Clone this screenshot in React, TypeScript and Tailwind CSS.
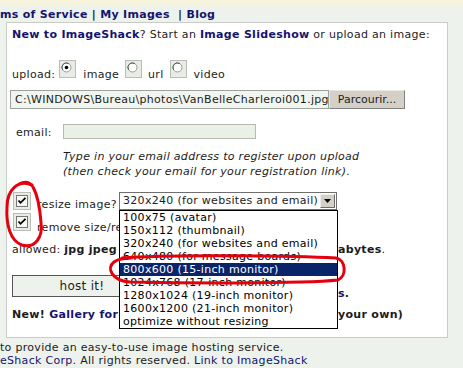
import React from 'react';

const NAVY = 'text-[#14146e]';

const options = [
    '100x75 (avatar)',
    '150x112 (thumbnail)',
    '320x240 (for websites and email)',
    '640x480 (for message boards)',
    '800x600 (15-inch monitor)',
    '1024x768 (17-inch monitor)',
    '1280x1024 (19-inch monitor)',
    '1600x1200 (21-inch monitor)',
    'optimize without resizing',
];

/** Square radio tile as drawn by the old browser theme */
function Radio({ checked }: { checked?: boolean }) {
    return (
        <svg width="17" height="18" viewBox="0 0 17 18" className="shrink-0">
            <rect x="0.5" y="0.5" width="16" height="17" fill="#e7ece5" stroke="#b8bdb6" />
            <circle cx="7.5" cy="7.5" r="4.5" fill="#fff" stroke="#9a9a9a" />
            <path d="M3.6 9.8 A4.5 4.5 0 0 1 9.8 3.6" fill="none" stroke="#555" strokeWidth="1" />
            {checked && <circle cx="7.5" cy="7.5" r="1.8" fill="#000" />}
        </svg>
    );
}

function Check() {
    return (
        <svg width="18" height="18" viewBox="0 0 18 18" className="shrink-0">
            <rect x="0.5" y="0.5" width="17" height="17" fill="#e7ece5" stroke="#b8bdb6" />
            <rect x="3.5" y="3.5" width="11" height="11" fill="#f7f8f5" stroke="#777" />
            <path d="M5.5 8.5 L7.5 10.8 L12.5 5.8" fill="none" stroke="#000" strokeWidth="1.8" />
        </svg>
    );
}

export default function App() {
    return (
        <div className="relative w-[463px] h-[368px] overflow-hidden bg-[#eef2ec] text-[11px] tracking-[0.3px] text-[#1c1c1c] font-['DejaVu_Sans',Verdana,sans-serif]">
            <div className="h-[5px] bg-[#f6f3dd]" />

            {/* top links */}
            <div className="h-[17px] pt-[3px] leading-[14px] font-bold whitespace-pre">
                <span className={NAVY}>ms of Service</span>
                <span> | </span>
                <span className={NAVY}>My Images</span>
                <span>  | </span>
                <span className={NAVY}>Blog</span>
            </div>

            {/* upload panel */}
            <div className="ml-[6px] w-[442px] h-[316px] border border-[#c9ccc8] bg-white px-[5px] flex flex-col">
                <div className="mt-[5px] leading-[14px] whitespace-nowrap">
                    <b className={NAVY}>New to ImageShack</b>? Start an <b className={NAVY}>Image Slideshow</b> or upload an image:
                </div>

                <div className="mt-[18px] h-[22px] flex whitespace-nowrap">
                    <span className="self-end leading-[14px]">upload:</span>
                    <span className="ml-[4px]"><Radio checked /></span>
                    <span className="self-end leading-[14px] ml-[7px]">image</span>
                    <span className="ml-[6px]"><Radio /></span>
                    <span className="self-end leading-[14px] ml-[6px]">url</span>
                    <span className="ml-[6px]"><Radio /></span>
                    <span className="self-end leading-[14px] ml-[7px]">video</span>
                </div>

                <div className="mt-[8px] h-[19px] flex -ml-[2px]">
                    <div className="w-[319px] h-[19px] border border-[#9da39b] bg-[#f1f5ef] pl-[4px] leading-[17px] overflow-hidden whitespace-nowrap">
                        C:\WINDOWS\Bureau\photos\VanBelleCharleroi001.jpg
                    </div>
                    <div className="w-[76px] h-[19px] bg-[#d4d0c8] border border-[#e8e6e0] border-r-[#808080] border-b-[#808080] text-center leading-[17px] tracking-normal">
                        Parcourir...
                    </div>
                </div>

                <div className="mt-[15px] h-[15px] flex items-center">
                    <span className="ml-[4px] w-[47px] leading-[14px] pt-[3px]">email:</span>
                    <div className="w-[193px] h-[15px] border border-[#b5bab3] bg-[#eaf0e8]" />
                </div>

                <div className="mt-[10px] ml-[51px] italic leading-[15px] whitespace-nowrap">
                    <div>Type in your email address to register upon upload</div>
                    <div>(then check your email for your registration link).</div>
                </div>

                <div className="mt-[13px] h-[20px] flex whitespace-nowrap">
                    <span className="ml-[1px]"><Check /></span>
                    <span className="self-end leading-[14px] ml-[6px] w-[82px]">resize image?</span>
                    <div className="w-[218px] h-[18px] border border-[#6e6e6e] bg-white flex items-center justify-between pl-[3px] pr-[1px]">
                        <span className="leading-[14px]">320x240 (for websites and email)</span>
                        <span className="w-[15px] h-[14px] bg-[#d4d0c8] border border-[#f0eee8] border-r-[#6b6b6b] border-b-[#6b6b6b] flex items-center justify-center">
                            <svg width="7" height="4" viewBox="0 0 7 4"><path d="M0 0 H7 L3.5 4 Z" fill="#000" /></svg>
                        </span>
                    </div>
                </div>

                <div className="mt-[1px] h-[22px] flex whitespace-nowrap">
                    <span className="ml-[1px]"><Check /></span>
                    <span className="self-end leading-[14px] ml-[6px] w-[82px] overflow-hidden">remove size/resolution bar</span>
                </div>

                <div className="mt-[8px] leading-[14px] flex whitespace-nowrap">
                    <span className="w-[107px] overflow-hidden">
                        allowed: <b>jpg jpeg png</b>
                    </span>
                    <span className="w-[219px]" />
                    <span><b>abytes</b>.</span>
                </div>

                <div className="mt-[18px] h-[26px] flex whitespace-nowrap">
                    <div className="w-[140px] h-[22px] border border-[#555] bg-[#eef2ec] text-[12px] leading-[20px] text-center">
                        host it!
                    </div>
                    <span className="self-end leading-[14px] ml-[186px] font-bold">
                        <span className={NAVY}>s</span>.
                    </span>
                </div>

                <div className="mt-[7px] leading-[14px] flex font-bold whitespace-nowrap">
                    <span className="w-[107px] overflow-hidden">
                        New! <span className={NAVY}>Gallery for</span>
                    </span>
                    <span className="w-[219px]" />
                    <span>your own)</span>
                </div>
            </div>

            {/* footer */}
            <div className="mt-[3px] leading-[13px] whitespace-nowrap">
                <div>to provide an easy-to-use image hosting service.</div>
                <div>
                    <span className={NAVY}>eShack Corp.</span> All rights reserved. <span className={NAVY}>Link to ImageShack</span>
                </div>
            </div>

            {/* open select list */}
            <div className="absolute left-[119px] top-[210px] w-[219px] border border-black bg-white leading-[13px] whitespace-nowrap">
                {options.map((o, i) => (
                    <div key={o} className={`h-[13px] pl-[3px] ${i === 4 ? 'bg-[#0a246a] text-white' : 'text-black'}`}>
                        {o}
                    </div>
                ))}
            </div>

            {/* hand-drawn red marks */}
            <svg className="absolute left-0 top-0 pointer-events-none" width="463" height="368" viewBox="0 0 463 368">
                <path
                    d="M32 185 C18 179 7 190 7 207 C6 224 10 241 22 245 C35 249 43 237 41 223 C40 209 38 196 33 187 C29 181 23 182 19 184"
                    fill="none" stroke="#e4000c" strokeWidth="3" strokeLinecap="round"
                />
                <path
                    d="M122 258 C170 254 300 256 336 258 C346 260 347 276 338 280 C300 284 180 283 130 282 C112 281 106 268 114 262 C118 259 124 258 132 258"
                    fill="none" stroke="#e4000c" strokeWidth="3" strokeLinecap="round"
                />
            </svg>
        </div>
    );
}
